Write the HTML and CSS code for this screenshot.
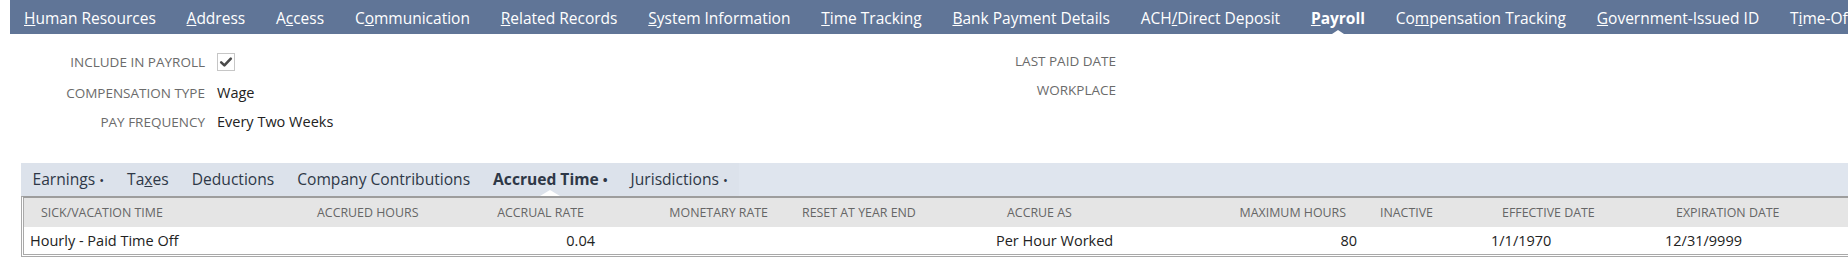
FILE: index.html
```html
<!DOCTYPE html>
<html lang="en">
<head>
  <meta charset="UTF-8">
  <title>Employee - Payroll</title>
  <link rel="stylesheet" href="styles.css">
</head>
<body>

  <nav class="main-tabs">
    <a class="tab"><u>H</u>uman Resources</a>
    <a class="tab"><u>A</u>ddress</a>
    <a class="tab">A<u>c</u>cess</a>
    <a class="tab">C<u>o</u>mmunication</a>
    <a class="tab"><u>R</u>elated Records</a>
    <a class="tab"><u>S</u>ystem Information</a>
    <a class="tab"><u>T</u>ime Tracking</a>
    <a class="tab"><u>B</u>ank Payment Details</a>
    <a class="tab">ACH<u>/</u>Direct Deposit</a>
    <a class="tab active"><u>P</u>ayroll</a>
    <a class="tab">Co<u>m</u>pensation Tracking</a>
    <a class="tab"><u>G</u>overnment-Issued ID</a>
    <a class="tab">T<u>i</u>me-Off</a>
  </nav>

  <section class="fields">
    <div class="field-group left">
      <div class="field check-row">
        <span class="label">Include in Payroll</span>
        <span class="checkbox">
          <svg width="16" height="16" viewBox="0 0 16 16"><path d="M3.2 8.4 L6.4 11.4 L12.8 4.6" fill="none" stroke="#4a4a4a" stroke-width="2.6" stroke-linecap="round" stroke-linejoin="round"/></svg>
        </span>
      </div>
      <div class="field">
        <span class="label">Compensation Type</span>
        <span class="value">Wage</span>
      </div>
      <div class="field">
        <span class="label">Pay Frequency</span>
        <span class="value">Every Two Weeks</span>
      </div>
    </div>
    <div class="field-group right">
      <div class="field">
        <span class="label">Last Paid Date</span>
        <span class="value"></span>
      </div>
      <div class="field">
        <span class="label">Workplace</span>
        <span class="value"></span>
      </div>
    </div>
  </section>

  <section class="subtab-panel">
    <div class="subtabs">
      <div class="subtab-list">
        <a class="subtab">Earnings<span class="dot">•</span></a>
        <a class="subtab">Ta<u>x</u>es</a>
        <a class="subtab">Deductions</a>
        <a class="subtab">Company Contributions</a>
        <a class="subtab active">Accrued Time<span class="dot">•</span></a>
        <a class="subtab">Jurisdictions<span class="dot">•</span></a>
      </div>
    </div>

    <div class="list">
      <table>
        <colgroup>
          <col style="width:276px">
          <col style="width:134px">
          <col style="width:167px">
          <col style="width:184px">
          <col style="width:205px">
          <col style="width:210px">
          <col style="width:163px">
          <col style="width:122px">
          <col style="width:174px">
          <col style="width:189px">
        </colgroup>
        <thead>
          <tr>
            <th>Sick/Vacation Time</th>
            <th class="num">Accrued Hours</th>
            <th class="num">Accrual Rate</th>
            <th class="num">Monetary Rate</th>
            <th>Reset at Year End</th>
            <th>Accrue As</th>
            <th class="num">Maximum Hours</th>
            <th>Inactive</th>
            <th>Effective Date</th>
            <th>Expiration Date</th>
          </tr>
        </thead>
        <tbody>
          <tr>
            <td>Hourly - Paid Time Off</td>
            <td class="num"></td>
            <td class="num">0.04</td>
            <td class="num"></td>
            <td></td>
            <td>Per Hour Worked</td>
            <td class="num">80</td>
            <td></td>
            <td>1/1/1970</td>
            <td>12/31/9999</td>
          </tr>
        </tbody>
      </table>
    </div>
  </section>

</body>
</html>
```

FILE: styles.css
```css
body {
  margin: 0;
  font-family: "Open Sans", "DejaVu Sans", sans-serif;
  background: #fff;
  color: #222;
  overflow: hidden;
}
a {
  cursor: pointer;
}

/* main record tabs */
.main-tabs {
  display: flex;
  height: 34px;
  margin-left: 10px;
  padding-left: 0;
  background: #607597;
  white-space: nowrap;
  overflow: hidden;
}
.tab {
  position: relative;
  flex: none;
  padding: 2px 15.4px 0;
  line-height: 32px;
  font-size: 15.5px;
  color: #fff;
  text-decoration: none;
}
.tab:first-child {
  padding-left: 14px;
}
.tab.active {
  font-weight: 700;
}
.tab.active::after {
  content: "";
  position: absolute;
  left: 50%;
  bottom: 0;
  margin-left: -6px;
  border-left: 6px solid transparent;
  border-right: 6px solid transparent;
  border-bottom: 4px solid #fff;
}

/* field groups */
.fields {
  display: flex;
  padding-top: 11px;
}
.field-group.left {
  width: 900px;
}
.field-group.right {
  margin-top: 1.5px;
}
.field {
  display: flex;
  align-items: center;
  height: 29px;
}
.field.check-row {
  height: 33px;
}
.label {
  flex: none;
  text-align: right;
  font-size: 13.5px;
  color: #6b6b6b;
  text-transform: uppercase;
}
.left .label {
  width: 205px;
}
.right .label {
  width: 216px;
}
.value {
  margin-left: 12px;
  font-size: 14.5px;
  color: #222;
}
.checkbox {
  display: flex;
  align-items: center;
  justify-content: center;
  box-sizing: border-box;
  width: 18px;
  height: 18px;
  margin-left: 12px;
  border: 1px solid #c6c6c6;
  background: #fff;
}

/* subtabs */
.subtab-panel {
  margin-top: 27px;
  margin-left: 21px;
}
.subtabs {
  display: flex;
  height: 33px;
  background: #dfe5ee;
}
.subtab-list {
  display: flex;
  background: #dce2eb;
}
.subtab {
  position: relative;
  padding: 0 11.5px;
  line-height: 33px;
  font-size: 15.6px;
  color: #2e3847;
  white-space: nowrap;
}
.subtab .dot {
  margin-left: 4px;
  font-size: 13px;
}
.subtab.active {
  font-weight: 700;
}
.subtab.active::after {
  content: "";
  position: absolute;
  left: 50%;
  bottom: 0;
  margin-left: -10px;
  border-left: 10px solid transparent;
  border-right: 10px solid transparent;
  border-bottom: 6px solid #fff;
}

/* list */
.list {
  border-top: 2px solid #9d9d9d;
  border-left: 3px double #a9a9a9;
  border-bottom: 3px double #a9a9a9;
  overflow: hidden;
}
table {
  table-layout: fixed;
  border-collapse: collapse;
  width: 1824px;
}
th {
  height: 29px;
  padding: 0 17px;
  background: #e5e5e5;
  font-size: 12.4px;
  font-weight: normal;
  color: #666;
  text-align: left;
  text-transform: uppercase;
  white-space: nowrap;
}
td {
  height: 27px;
  padding: 0 6px;
  font-size: 14.5px;
  color: #222;
  white-space: nowrap;
}
.num {
  text-align: right;
}
```
